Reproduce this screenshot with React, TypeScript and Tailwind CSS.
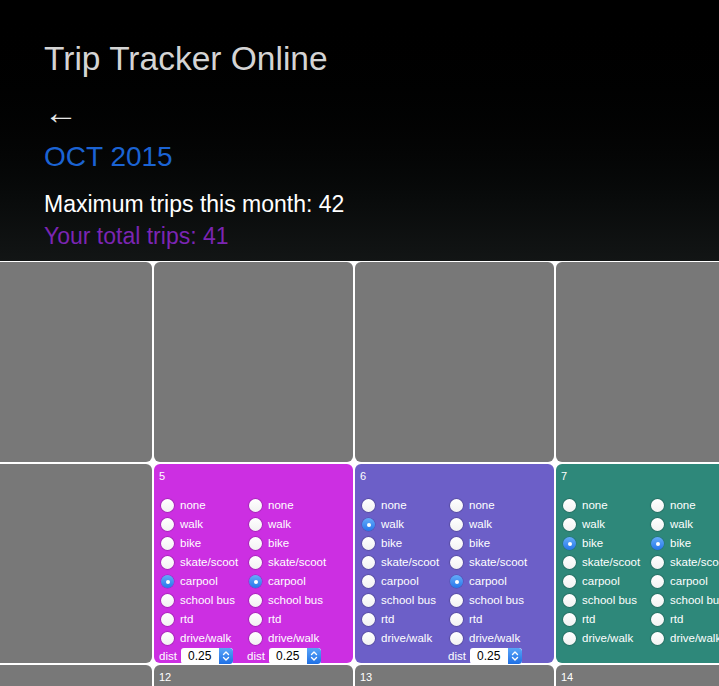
import React from "react";

const MODES = ["none", "walk", "bike", "skate/scoot", "carpool", "school bus", "rtd", "drive/walk"];

function Radio({ checked }: { checked: boolean }) {
  if (checked) {
    return (
      <span className="block w-[13px] h-[13px] shrink-0 rounded-full bg-linear-to-b from-[#64acf9] to-[#2676ea] shadow-[0_0_0_0.5px_rgba(20,60,140,0.4)]">
        <span className="flex w-full h-full items-center justify-center">
          <span className="block w-[4px] h-[4px] rounded-full bg-white" />
        </span>
      </span>
    );
  }
  return (
    <span className="block w-[13px] h-[13px] shrink-0 rounded-full bg-linear-to-b from-white to-[#f2f2f2] shadow-[0_0_1px_0.5px_rgba(0,0,0,0.35)]" />
  );
}

function Dist() {
  return (
    <div className="flex items-center h-[16px]">
      <span className="w-[22px] text-[11.5px] leading-[16px] text-white">dist</span>
      <span className="flex h-[16px] w-[52px] bg-white rounded-[3px] overflow-hidden">
        <span className="flex-1 pl-[7px] text-[12px] leading-[16px] text-black">0.25</span>
        <span className="w-[14px] h-full bg-linear-to-b from-[#58a4f8] to-[#1e6fe4] flex items-center justify-center rounded-r-[3px]">
          <svg width="8" height="12" viewBox="0 0 8 12" fill="none" stroke="white" strokeWidth="1.4" strokeLinecap="round" strokeLinejoin="round">
            <path d="M1.5 4.5 L4 2 L6.5 4.5" />
            <path d="M1.5 7.5 L4 10 L6.5 7.5" />
          </svg>
        </span>
      </span>
    </div>
  );
}

function Column({ sel, dist }: { sel: number; dist?: boolean }) {
  return (
    <div className="w-[88px] shrink-0">
      {MODES.map((m, i) => (
        <div key={m} className="flex items-center h-[19px]">
          <span className="block ml-[2px]">
            <Radio checked={i === sel} />
          </span>
          <span className="ml-[6px] text-[11.5px] leading-[19px] whitespace-nowrap text-white">{m}</span>
        </div>
      ))}
      {dist ? <Dist /> : null}
    </div>
  );
}

type Cell = {
  n?: number;
  bg: string;
  form?: { a: number; b: number; da?: boolean; db?: boolean };
};

function CalCell({ cell }: { cell: Cell }) {
  return (
    <div className={`rounded-[6px] pl-[5px] pt-[6px] text-white ${cell.bg}`}>
      <div className="h-[13px] text-[11px] leading-[13px]">{cell.n ?? ""}</div>
      {cell.form ? (
        <div className="mt-[13px] flex">
          <Column sel={cell.form.a} dist={cell.form.da} />
          <Column sel={cell.form.b} dist={cell.form.db} />
        </div>
      ) : null}
    </div>
  );
}

const GRAY = "bg-[#787878]";

const cells: Cell[] = [
  { bg: GRAY }, { bg: GRAY }, { bg: GRAY }, { bg: GRAY },
  { n: 1, bg: GRAY }, { n: 2, bg: GRAY }, { n: 3, bg: GRAY },
  { n: 4, bg: GRAY },
  { n: 5, bg: "bg-[#cc2fe2]", form: { a: 4, b: 4, da: true, db: true } },
  { n: 6, bg: "bg-[#6c5fc8]", form: { a: 1, b: 4, db: true } },
  { n: 7, bg: "bg-[#2e887a]", form: { a: 2, b: 2 } },
  { n: 8, bg: GRAY }, { n: 9, bg: GRAY }, { n: 10, bg: GRAY },
  { n: 11, bg: GRAY }, { n: 12, bg: GRAY }, { n: 13, bg: GRAY }, { n: 14, bg: GRAY },
  { n: 15, bg: GRAY }, { n: 16, bg: GRAY }, { n: 17, bg: GRAY },
];

export default function App() {
  return (
    <div className="w-full h-[686px] overflow-hidden bg-white font-['Liberation_Sans',Arial,sans-serif]">
      <header className="h-[261px] bg-linear-to-b from-black to-[#121515] pl-[44px] pt-[40px]">
        <h1 className="text-[33.5px] leading-[38px] text-[#d4d4d4]">Trip Tracker Online</h1>
        <div className="mt-[22px] h-[24px] flex items-center text-[34px] leading-[24px] text-[#e6e6e6]">←</div>
        <div className="mt-[17px] text-[28px] leading-[32px] text-[#1b63d3]">OCT 2015</div>
        <div className="mt-[18px] text-[23px] leading-[26px] text-white">Maximum trips this month: 42</div>
        <div className="mt-[6px] text-[23px] leading-[26px] text-[#7b25b3]">Your total trips: 41</div>
      </header>
      <div className="pt-[1px] overflow-hidden">
        <div className="-ml-[47px] w-max grid grid-cols-[repeat(7,199px)] grid-rows-[200px_199px_199px] gap-[2px]">
          {cells.map((c, i) => (
            <CalCell key={i} cell={c} />
          ))}
        </div>
      </div>
    </div>
  );
}
